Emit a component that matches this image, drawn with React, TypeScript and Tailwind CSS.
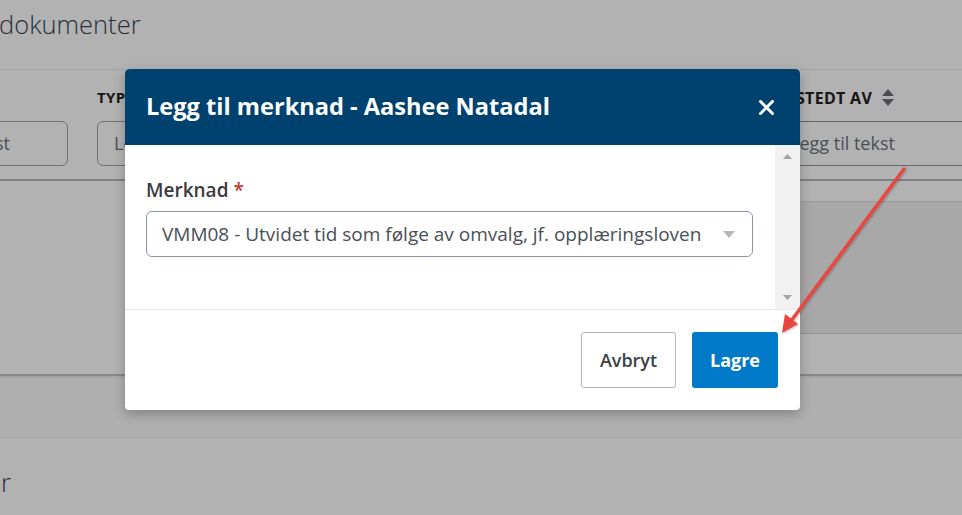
import React from 'react';

const font = "font-['Open_Sans','Liberation_Sans',sans-serif]";

const FilterInput: React.FC<{ className?: string }> = ({ className = '' }) => (
  <div
    className={`h-[45px] border border-[#9aa4ae] rounded-[6px] flex items-center pl-4 text-[18px] text-[#6b737c] whitespace-nowrap overflow-hidden ${className}`}
  >
    Legg til tekst
  </div>
);

const SortIcon: React.FC = () => (
  <svg width="12" height="17" viewBox="0 0 12 17" className="ml-[10px]">
    <path d="M6 0 L12 7 L0 7 Z" fill="#6b6f74" />
    <path d="M6 17 L12 10 L0 10 Z" fill="#6b6f74" />
  </svg>
);

const Background: React.FC = () => (
  <div className="flex flex-col">
    <div className="h-[69px] pt-[4px]">
      <h1 className="text-[25.5px] font-light text-[#3b4554] leading-[40px] -ml-[1px]">dokumenter</h1>
    </div>

    <div className="border-t border-[#ececec] -ml-[112px] w-[1100px]">
      <div className="grid grid-cols-[209px_209px_209px_259px_300px] h-[51px] items-center text-[15px] font-bold text-[#222] tracking-[0.3px] uppercase pt-[4px]">
        <div>Dato</div>
        <div>Type</div>
        <div />
        <div />
        <div className="flex items-center text-[16px]">
          Utstedt av
          <SortIcon />
        </div>
      </div>
      <div className="grid grid-cols-[209px_209px_209px_259px_300px] pb-[13px] border-b-2 border-[#b5bcc3]">
        <FilterInput className="w-[180px]" />
        <FilterInput className="w-[180px]" />
        <FilterInput className="w-[180px]" />
        <FilterInput className="w-[230px]" />
        <div className="h-[45px] border-y border-[#8e969e] flex items-center pl-4 text-[18px] text-[#6b737c]">
          Legg til tekst
        </div>
      </div>
      <div className="grid grid-cols-[209px_209px_209px_259px_300px] h-[193px]">
        <div />
        <div />
        <div />
        <div />
        <div className="flex flex-col">
          <div className="h-[21px] border-b border-[#dcdcdc]" />
          <div className="h-[132px] bg-[#f1f1f2] border-b border-[#d4d4d4]" />
          <div className="flex-1" />
        </div>
      </div>
    </div>

    <div className="h-[64px] bg-[#fbfbfb] border-t-2 border-[#c4c4c4] border-b border-b-[#f0f0f0] shadow-[inset_0_3px_3px_-2px_rgba(0,0,0,0.1)]" />
    <div className="pt-[24px]">
      <h2 className="text-[25.5px] font-light text-[#3b4554] leading-[40px] -ml-[115px]">Merknader</h2>
    </div>
  </div>
);

const Modal: React.FC = () => (
  <div className="absolute left-[125px] top-[69px] w-[675px] bg-white rounded-[4px] shadow-[0_4px_12px_rgba(0,0,0,0.25)] overflow-hidden">
    <div className="h-[76px] bg-[#00426f] flex items-center justify-between pl-[21px] pr-[26px] rounded-t-[4px]">
      <h2 className="text-[23.6px] font-bold text-white">Legg til merknad - Aashee Natadal</h2>
      <svg width="15" height="15" viewBox="0 0 15 15">
        <path d="M1.5 1.5 L13.5 13.5 M13.5 1.5 L1.5 13.5" stroke="#fff" strokeWidth="3" strokeLinecap="square" />
      </svg>
    </div>

    <div className="flex h-[164px]">
      <div className="flex-1 pl-[21px] pr-[22px] pt-[32px]">
        <label className="block text-[19px] font-semibold text-[#3a3a3a] leading-[26px]">
          Merknad <span className="text-[#c0392b]">*</span>
        </label>
        <div className="mt-[8px] h-[46px] border border-[#8a95a1] rounded-[6px] flex items-center justify-between pl-[15px] pr-[17px]">
          <span className="text-[19px] text-[#4a4f55] whitespace-nowrap">
            VMM08 - Utvidet tid som følge av omvalg, jf. opplæringsloven
          </span>
          <svg width="12" height="7" viewBox="0 0 12 7">
            <path d="M0 0 L12 0 L6 7 Z" fill="#b4b8bd" />
          </svg>
        </div>
      </div>
      <div className="w-[25px] bg-[#f1f1f1] flex flex-col items-center justify-between pt-[9px] pb-[9px]">
        <svg width="9" height="5" viewBox="0 0 9 5">
          <path d="M4.5 0 L9 5 L0 5 Z" fill="#a3a3a3" />
        </svg>
        <svg width="9" height="5" viewBox="0 0 9 5">
          <path d="M0 0 L9 0 L4.5 5 Z" fill="#a3a3a3" />
        </svg>
      </div>
    </div>

    <div className="border-t border-[#e6e6e6] h-[101px] flex items-center justify-end gap-[16px] pr-[22px]">
      <button className="h-[56px] w-[95px] border border-[#b3b6b9] rounded-[3px] bg-white text-[18px] font-semibold text-[#3a3f44]">
        Avbryt
      </button>
      <button className="h-[56px] w-[86px] rounded-[3px] bg-[#0079c9] text-[18px] font-bold text-white">
        Lagre
      </button>
    </div>
  </div>
);

const App: React.FC = () => {
  return (
    <div className={`relative w-[962px] h-[515px] overflow-hidden bg-white ${font}`}>
      <Background />
      <div className="absolute inset-0 bg-black/30" />
      <Modal />
      <svg className="absolute left-0 top-0 pointer-events-none" width="962" height="515">
        <defs>
          <filter id="sh" x="-20%" y="-20%" width="140%" height="140%">
            <feDropShadow dx="1" dy="1" stdDeviation="1" floodColor="#000" floodOpacity="0.25" />
          </filter>
        </defs>
        <g filter="url(#sh)">
          <line x1="904" y1="169" x2="791" y2="321" stroke="#e8473f" strokeWidth="3.5" strokeLinecap="round" />
          <path d="M782 333 L785 314 L798 324 Z" fill="#e8473f" />
        </g>
      </svg>
    </div>
  );
};

export default App;
